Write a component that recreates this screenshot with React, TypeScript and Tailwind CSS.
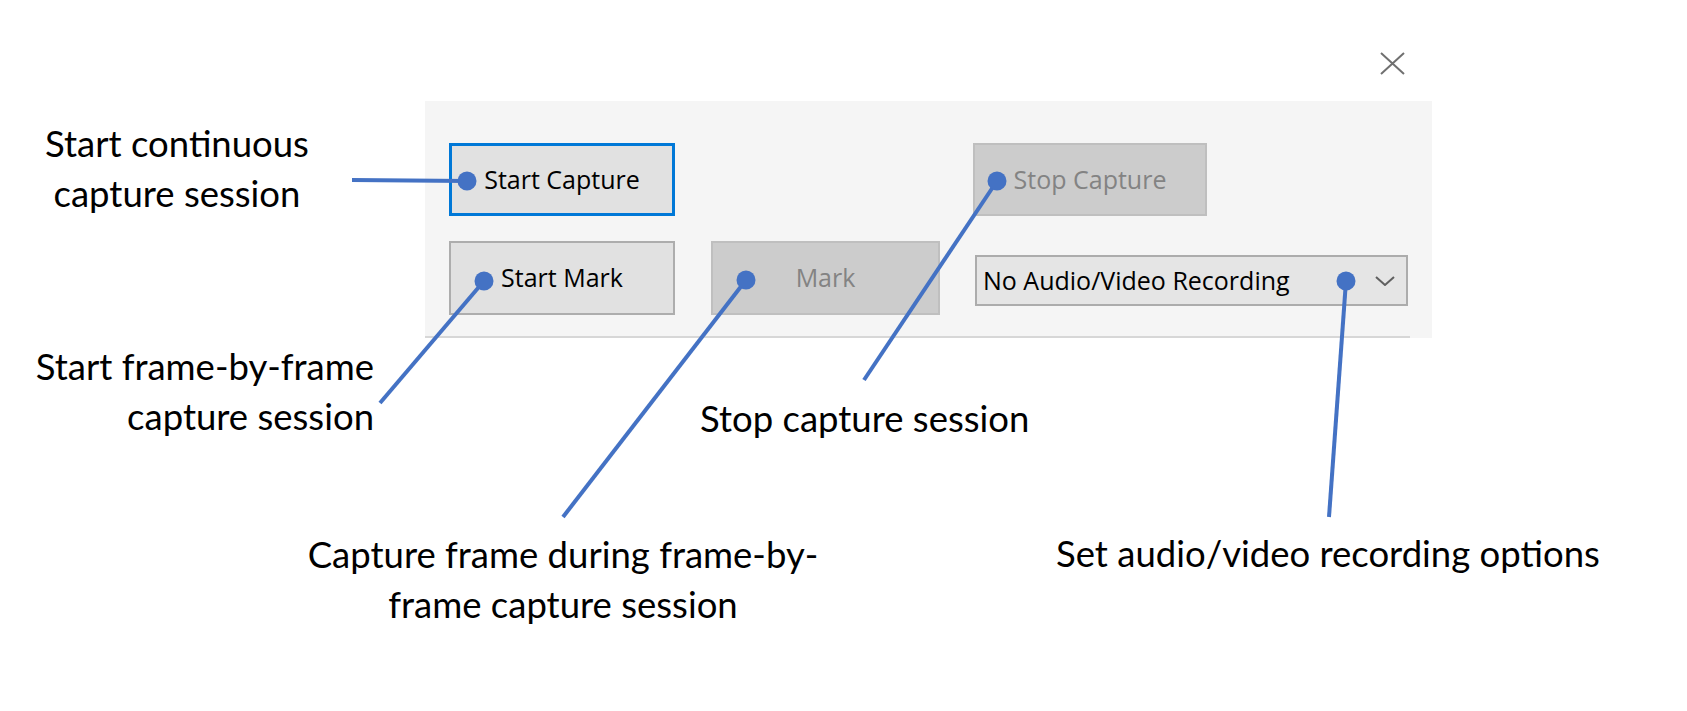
// Capture toolbar with callout annotations

const labelFont = "font-['Lato','Open_Sans',sans-serif] text-[36.5px] leading-[50px] text-black";
const uiFont = "font-['Open_Sans','Noto_Sans',sans-serif] text-[25px]";

function ToolButton({
  label,
  width,
  focused = false,
  disabled = false,
}: {
  label: string;
  width: string;
  focused?: boolean;
  disabled?: boolean;
}) {
  const tone = disabled
    ? "bg-[#cccccc] border-2 border-[#bfbfbf] text-[#838383]"
    : focused
      ? "bg-[#e1e1e1] border-[3px] border-[#0078d7] text-black"
      : "bg-[#e1e1e1] border-2 border-[#adadad] text-black";
  return (
    <button
      type="button"
      disabled={disabled}
      className={`${width} h-full flex items-center justify-center ${tone} ${uiFont}`}
    >
      {label}
    </button>
  );
}

function Callouts() {
  const lines: [number, number, number, number][] = [
    [352, 180, 467, 181],
    [380, 403, 484, 281],
    [563, 517, 746, 280],
    [864, 380, 997, 181],
    [1329, 517, 1346, 281],
  ];
  return (
    <svg className="absolute inset-0 pointer-events-none" width="1687" height="711" viewBox="0 0 1687 711">
      {lines.map(([x1, y1, x2, y2], i) => (
        <g key={i}>
          <line x1={x1} y1={y1} x2={x2} y2={y2} stroke="#4472c4" strokeWidth="4" />
          <circle cx={x2} cy={y2} r="9.5" fill="#4472c4" />
        </g>
      ))}
    </svg>
  );
}

export default function App() {
  return (
    <div className="relative w-[1687px] h-[711px] bg-white overflow-hidden">
      <div className="pt-[52px] pl-[1380px]">
        <svg width="25" height="23" viewBox="0 0 25 23" className="block">
          <path d="M1 1 L24 22 M24 1 L1 22" stroke="#707070" strokeWidth="2" fill="none" />
        </svg>
      </div>

      <div className="ml-[425px] mt-[26px] w-[1007px] bg-[#f5f5f5]">
        <div className="pl-[24px] pt-[42px] pb-[21px]">
          <div className="flex h-[73px]">
            <ToolButton label="Start Capture" width="w-[226px]" focused />
            <div className="ml-[298px] h-full flex">
              <ToolButton label="Stop Capture" width="w-[234px]" disabled />
            </div>
          </div>
          <div className="flex mt-[25px] h-[74px]">
            <ToolButton label="Start Mark" width="w-[226px]" />
            <div className="ml-[36px] h-full flex">
              <ToolButton label="Mark" width="w-[229px]" disabled />
            </div>
            <div
              className={`ml-[35px] mt-[14px] w-[433px] h-[51px] flex items-center justify-between pl-[6px] pr-[11px] bg-[#e5e5e5] border-2 border-[#acacac] text-black ${uiFont}`}
            >
              <span>No Audio/Video Recording</span>
              <svg width="20" height="10" viewBox="0 0 20 10">
                <path d="M1 1 L10 9 L19 1" stroke="#606060" strokeWidth="2" fill="none" />
              </svg>
            </div>
          </div>
        </div>
        <div className="h-[2px] bg-[#d7d7d7] mr-[22px]" />
      </div>

      <div className={`absolute left-[17px] top-[118px] w-[320px] text-center ${labelFont}`}>
        Start continuous
        <br />
        capture session
      </div>
      <div className={`absolute left-[0px] top-[341px] w-[374px] text-right ${labelFont}`}>
        Start frame-by-frame
        <br />
        capture session
      </div>
      <div className={`absolute left-[243px] top-[529px] w-[640px] text-center ${labelFont}`}>
        Capture frame during frame-by-
        <br />
        frame capture session
      </div>
      <div className={`absolute left-[700px] top-[393px] whitespace-nowrap ${labelFont}`}>
        Stop capture session
      </div>
      <div className={`absolute left-[1056px] top-[528px] whitespace-nowrap ${labelFont}`}>
        Set audio/video recording options
      </div>

      <Callouts />
    </div>
  );
}
